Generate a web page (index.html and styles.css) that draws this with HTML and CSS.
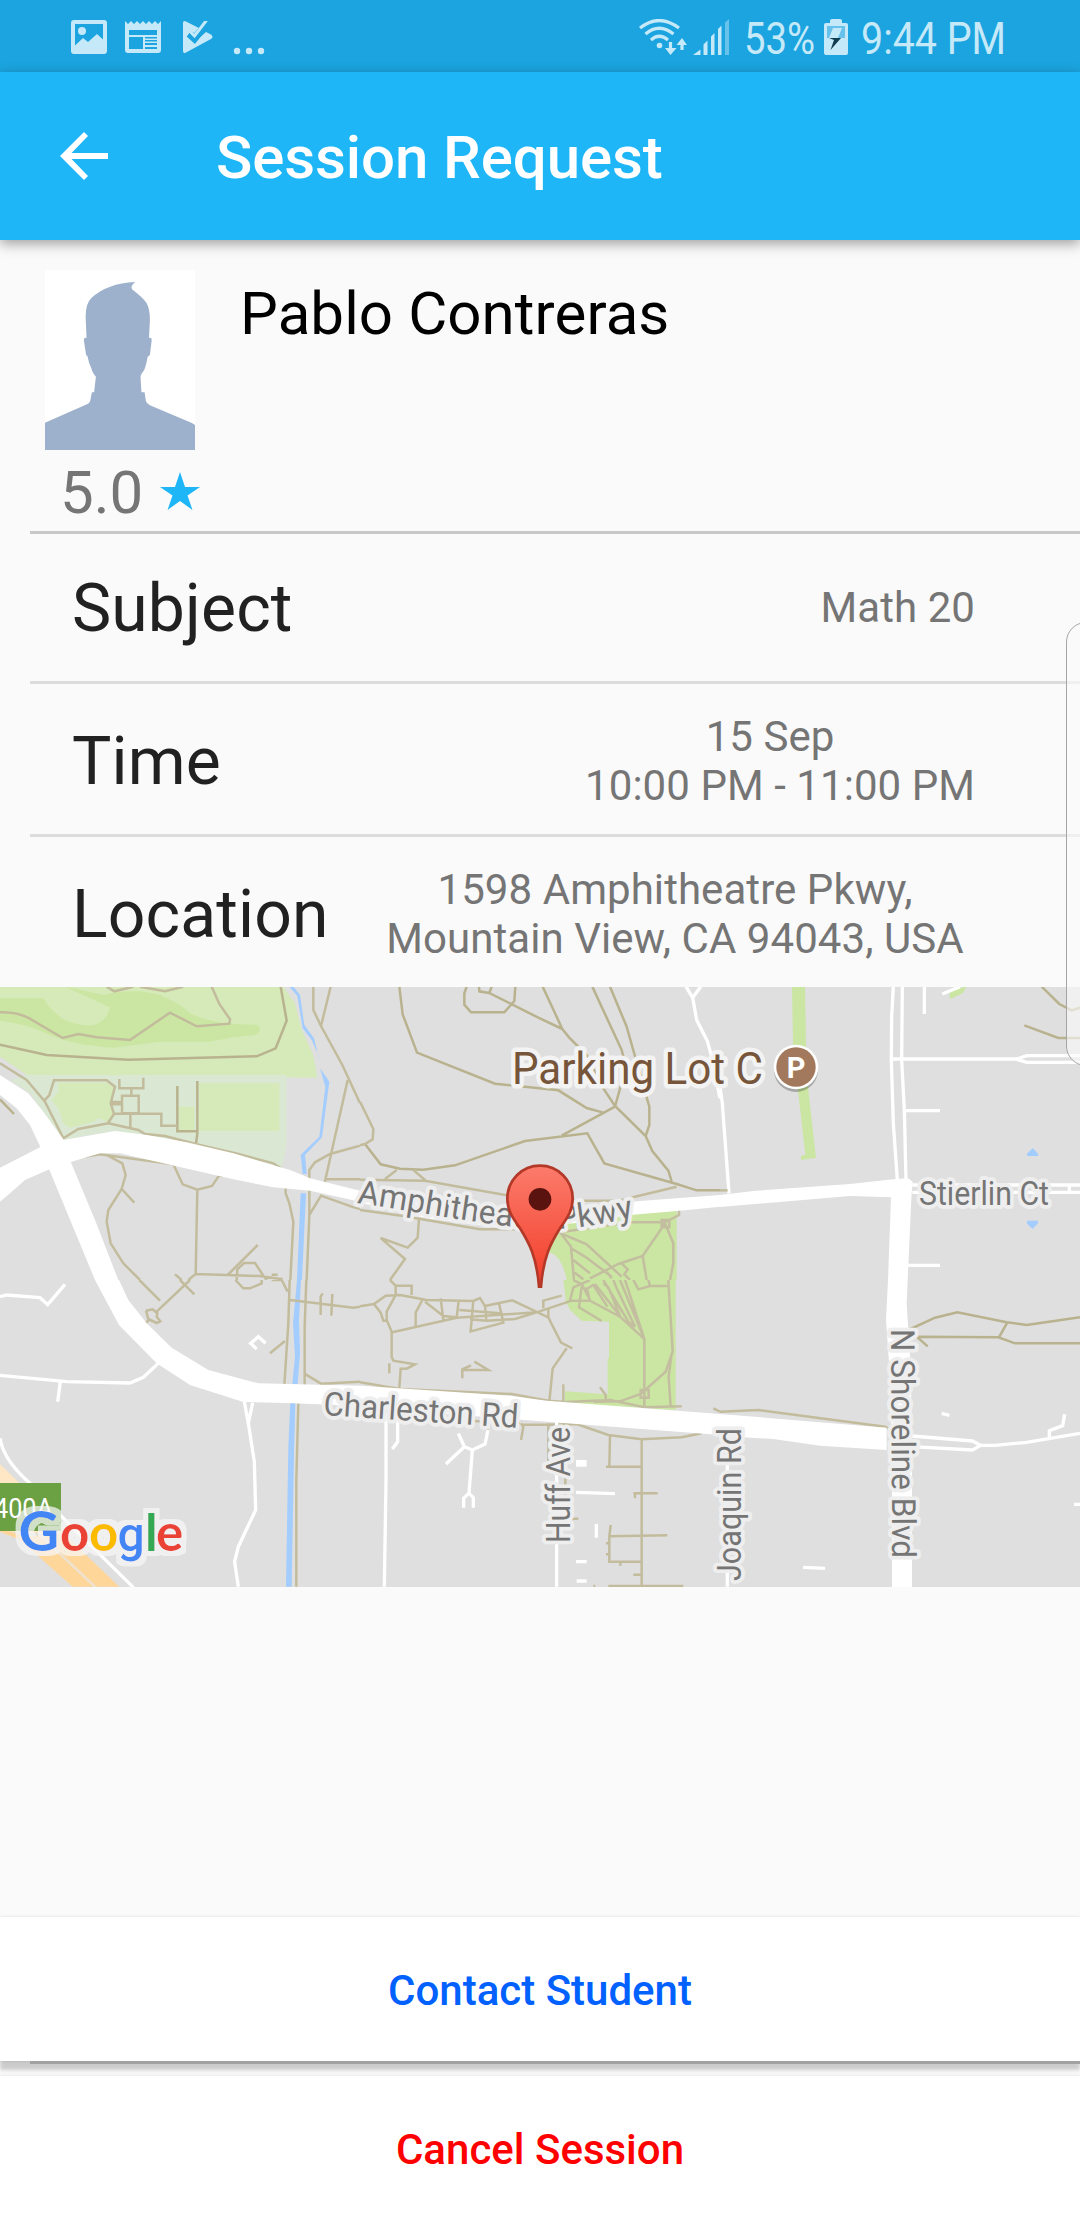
FILE: index.html
```html
<!DOCTYPE html>
<html lang="en">
<head>
<meta charset="utf-8">
<title>Session Request</title>
<link rel="stylesheet" href="styles.css">
</head>
<body>
<div class="screen">
  <header class="status">
    <svg class="status-image" viewBox="0 0 36 34"><path fill-rule="evenodd" d="M3 0H33Q36 0 36 3V31Q36 34 33 34H3Q0 34 0 31V3Q0 0 3 0ZM4 4V25.500L12 18L17 22L26 14L32 19.500V4Z"/><circle cx="11" cy="11" r="4"/></svg>
    <svg class="status-news" viewBox="0 0 36 32"><path fill-rule="evenodd" d="M0 0L3 3L6 0L9 3L12 0L15 3L18 0L21 3L24 0L27 3L30 0L33 3L36 0V29Q36 32 33 32H3Q0 32 0 29ZM4 9V14H32V9ZM4 16V28H18V16ZM20 16V17.500H32V16ZM20 19V20.500H32V19ZM20 22V24H32V22ZM20 26V28H32V26Z"/></svg>
    <svg class="status-check" viewBox="0 0 30 32"><path d="M0 2Q0-1 3 0.500L16 7L11.500 12L7.500 10.500L5 14L11.500 21L23 11L28 13.500Q31 16 28 18L3 31.500Q0 33 0 30Z"/><path d="M6 13L11.500 18L24.500 1.500" fill="none" stroke="#1ba4df" stroke-width="7"/><path d="M6 12.500L11.500 18L24.500 1" fill="none" stroke="#c5e9f8" stroke-width="3" transform="translate(0 -3)"/></svg>
    <svg class="status-dots" viewBox="0 0 32 8"><circle cx="4" cy="4" r="3.200"/><circle cx="16" cy="4" r="3.200"/><circle cx="28" cy="4" r="3.200"/></svg>
    <div class="status-right">
      <svg class="status-wifi" viewBox="0 0 48 36"><g fill="none" stroke="#c5e9f8" stroke-width="3.200"><path d="M1 9Q20-6 40 9M6.500 15Q20 3.500 34.500 15M12 21Q20 13.500 29 21"/><path d="M31.500 23V32M43 31V23"/></g><circle cx="20.500" cy="26.500" r="2.800"/><path d="M26 29L31.500 36L37.500 29ZM37.500 26L43 19L48 26Z"/></svg>
      <svg class="status-signal" viewBox="0 0 36 36"><path d="M0 36L7.500 30.500V36ZM10.500 36V25.500L14.500 21.500V36ZM18 36V17.500L21.500 14V36ZM25 36V10L28.500 6.500V36Z"/><path d="M32 36V3.500L36 0V36Z" opacity=".45"/></svg>
      <svg class="status-percent" viewBox="0 0 76 72"><text x="1" y="54" textLength="71" lengthAdjust="spacingAndGlyphs">53%</text></svg>
      <svg class="status-battery" viewBox="0 0 24 36"><path d="M2 4H6V2Q6 0 8 0H16Q18 0 18 2V4H22Q24 4 24 6V34Q24 36 22 36H2Q0 36 0 34V6Q0 4 2 4Z"/><path d="M3 7H21V19H3Z" fill="#67c1ea"/><path d="M9 9H18L14 19H5Z"/><path d="M5 19H17L6.500 31L10 21Z" fill="#123c50"/></svg>
      <svg class="status-time" viewBox="0 0 152 72"><text x="1" y="54" textLength="145" lengthAdjust="spacingAndGlyphs">9:44 PM</text></svg>
    </div>
  </header>
  <div class="appbar">
    <svg class="back" viewBox="0 0 48 48"><path d="M48 21H11.500L28 4L24 0L0 24L24 48L28 44L11.500 27H48Z"/></svg>
    <h1>Session Request</h1>
  </div>

  <section class="profile">
    <div class="person">
      <svg class="avatar" viewBox="101 90 336 540" preserveAspectRatio="none"><path d="M101 548L195 493Q202 490 203 478L206 457H211L215 410Q206 397 205 385Q199 370 196 348Q193 348 192 335L188 300Q188 292 194 294L192 230Q192 190 205 174Q240 130 303 126Q290 140 297 149Q320 172 328 188Q336 205 336 240L334 294Q340 292 340 300L336 345L331 350Q326 388 320 396Q315 404 315 412L317 457H324L327 483Q328 490 336 496L430 549L437 555V630H101Z"/></svg>
      <div class="rating"><span>5.0</span><svg class="star" viewBox="0 0 40 38"><path d="M20 0L25 15H40L27.500 23.500L32.500 38L20 29L7.500 38L12.500 23.500L0 15H15Z"/></svg></div>
    </div>
    <h2>Pablo Contreras</h2>
  </section>

  <section class="details">
    <div class="row"><span class="label">Subject</span><span class="value">Math 20</span></div>
    <div class="row"><span class="label">Time</span><span class="value"><span class="date">15 Sep</span><br>10:00 PM - 11:00 PM</span></div>
    <div class="row row-location"><span class="label">Location</span><span class="value">1598 Amphitheatre Pkwy,<br>Mountain View, CA 94043, USA</span></div>
  </section>

  <svg class="map" viewBox="0 987 1080 600">
    <defs>
      <linearGradient id="pin" x1="0" y1="0" x2="0" y2="1"><stop offset="0" stop-color="#fc7b6b"/><stop offset="1" stop-color="#f23d29"/></linearGradient>
      <filter id="halo" x="-20%" y="-30%" width="140%" height="160%"><feMorphology in="SourceAlpha" operator="dilate" radius="5"/><feGaussianBlur stdDeviation=".7" result="d"/><feFlood flood-color="#f7f7f7" flood-opacity=".72"/><feComposite in2="d" operator="in" result="h"/><feMerge><feMergeNode in="h"/><feMergeNode in="SourceGraphic"/></feMerge></filter>
      <path id="amph" d="M357 1203C410 1210 480 1225 540 1229C580 1230 610 1222 660 1212"/>
    </defs>

    <!-- north-west tile -->
    <svg x="0" y="980" width="360" height="300" viewBox="0 0 1080 900">
      <path class="park" d="M0 20H850L885 70L905 150L940 225L952 293L600 290L80 285L0 230Z"/>
      <path class="wood" d="M0 55H130Q150 90 190 118Q250 145 290 133Q325 115 330 82L195 20L310 45Q400 22 480 45Q540 70 570 100Q620 125 700 132L770 134Q792 150 765 165L700 172L630 185H480L340 203Q220 195 150 165Q80 130 0 122Z"/>
      <path class="school" d="M30 300L85 285H860V500L845 565L700 525L340 452L190 480L90 340Z"/>
      <path class="park" d="M175 308H320L342 322L330 370L340 402L322 425L295 413L280 425L210 443L190 430L175 385L155 360L175 335ZM597 310H838V453H597ZM537 380H583V450H537Z"/>
      <path class="water" d="M868 20H880L900 45L913 135L942 175L960 250L955 225L935 180L908 145L892 48ZM960 265L988 305L966 472L915 525L920 582H908L902 525L958 470L976 320ZM902 640H918L906 900H891Z"/>
      <path class="trail" d="M0 97Q50 95 88 115L188 174L235 162L290 172L390 180L510 98L590 139L688 131L690 118L658 72L635 20M320 20L343 34L400 20M420 20L495 34L550 20"/>
      <path class="trail dark" d="M0 194L140 225L385 239L770 229L827 205L860 122L842 20M0 358L42 402M592 303V460L587 500M532 318V454H592"/>
      <path class="trail" d="M0 250L80 300L135 365L190 475L235 447L325 430L415 450L435 462L495 468L590 493L715 522L820 550L843 565M133 362L148 345L162 301H320L345 320L332 370L342 402L322 432M358 297V325H430V293M394 325V347M366 347H416V400H366ZM332 366H366M332 373H366M342 401H484V437H532M391 401V445M225 535L300 523L520 553L548 613L592 629L636 618L657 587H672M320 525L367 550L377 585L365 627L325 690L320 725L332 790L370 850L420 900M365 627L403 668M592 629L587 883M525 883L545 900M565 900L587 882L780 888L848 898M683 885L773 795M710 900L712 868L732 849H765L790 887L800 900M815 884H833M857 625V640L868 670L880 725L871 900M928 630V705L920 900M928 705L963 647L1055 680L1080 687M940 20V90L963 138L1027 255L1080 370M992 20L963 138M1043 300L974 608M975 598H1080M928 600V570L945 547L990 522L1080 497"/>
      <path class="road" d="M0 563L120 502L190 480L345 453L440 465L560 487L700 520L870 570L930 595L1080 632V665L930 632L820 622L700 598L500 552L360 520L300 520L215 545L150 567L75 600L30 640L0 665Z"/>
      <path class="road" d="M0 285L85 340L130 395L190 478L212 545L285 720L355 900H285L147 567L123 505L90 435L50 385L0 345Z"/>
    </svg>

    <!-- north tile -->
    <svg x="360" y="980" width="360" height="300" viewBox="0 0 1080 900">
      <path class="wood" d="M560 700L950 692V900H620Q605 830 575 820L550 815Z"/>
      <path class="trail dark" d="M118 20L128 103L171 218L405 311L595 331L680 384L730 398M320 20L313 40V74L333 97H433L463 63L466 20M357 20L358 34L388 39L395 20M388 39L535 113L607 147M548 20L607 147L627 172L680 225L730 325L765 378L857 468L877 513L925 572L935 605M697 20L785 210L790 230V290L765 380L605 467M750 20L800 140L845 300L868 380V435L857 468M15 492L62 553L120 566L190 569L285 556L495 483L682 460L733 550L950 612L1010 631H1080"/>
      <path class="trail" d="M0 365L40 447L38 478L15 492L0 496M0 599L195 602L440 646M75 597L110 570M160 570L200 604M640 662H775L950 620M0 690L130 708L360 748L470 748M177 715L173 773L143 803L62 774L135 837L90 900"/>
      <path class="road" d="M0 632L110 637L300 665L440 697L640 690L810 665L1080 645V680L960 692L810 705L640 730L430 745L200 715L0 668Z"/>
      <path class="minor" d="M978 20L998 53L1022 20M998 53L1010 120L1042 183L1055 230L1080 355"/>
      <path class="trail green" d="M600 757L805 727H915L957 705V692M600 757L633 800L642 900M603 760L680 793L785 890M637 807L680 833L755 890M640 840L690 880M640 875L670 898M915 730L848 828L775 852L690 895M915 730L940 790V850L930 900M848 828L860 900M785 850L803 868L793 883L810 900M740 875L755 895M905 720H928V742H905Z"/>
    </svg>

    <!-- north-east tile -->
    <svg x="720" y="980" width="360" height="300" viewBox="0 0 1080 900">
      <path class="wood" d="M216 20H255L258 190L265 330L288 533L243 540V527L256 525L235 340L219 195ZM687 30L740 20L728 40L690 58Z"/>
      <path class="water" d="M921 521L938 504L954 521V528H921ZM921 722H954V730L938 747L921 731Z"/>
      <path class="trail dark" d="M965 20L1018 72L1055 91L1080 83M913 136L1015 174H1080"/>
      <path class="minor" d="M520 20L515 110L514 240L520 430L532 600M547 20L545 240L553 390L558 600M514 237H890L920 227H1080M890 238L920 247H1080M558 392H660M667 42L720 20M613 20V102M577 615H1080M577 637H1080M1048 615V637M563 856H660M0 320L7 370L27 640"/>
      <path class="trail" d="M0 631H23"/>
      <path class="road" d="M0 645L100 633L390 612L520 598L565 595L578 605L575 640L572 700L563 900H504L513 652L390 648L0 681Z"/>
    </svg>

    <!-- south-west tile -->
    <svg x="0" y="1280" width="360" height="310" viewBox="0 0 1080 930">
      <path class="water" d="M891 0H903L897 120L900 220L893 312H877L885 230L879 130ZM871 368H886L882 520L875 920H858L865 500Z"/>
      <path class="trail" d="M418 0L480 62M540 0L583 43M570 0L470 95M438 92L458 88L472 100L470 110L481 124L470 129L445 117L438 92M436 130L450 117M706 0L730 25H750L785 10V0M815 0H845L863 35M869 0L865 130L853 315M919 0L914 140V315M871 60L1060 83L1080 80M962 105V50L968 40M994 107L997 42M855 183L810 220M912 280L963 311L1080 305M895 370L889 600V920"/>
      <path class="minor" d="M0 50L20 45L120 53L143 74L195 13M0 286L200 305L390 309L430 292L475 250M181 305L173 365M733 365L745 430L763 545L767 690L715 800L704 845L715 920M758 368L745 430M0 475Q10 540 90 610M770 207L752 190L775 170L797 190"/>
      <path class="highway light" d="M0 553L90 640L195 765L0 753Z"/>
      <path class="highway" d="M0 745L80 770L190 760L358 920H218L60 780L0 755Z"/>
      <path class="lane" d="M110 755L288 923"/>
      <path class="minor" d="M90 610L200 725L400 922"/>
      <path class="road" d="M285 0H357L385 60L440 130L515 203L625 270L775 310L1080 317V378L880 370L730 366L570 315L470 250L357 135Z"/>
    </svg>

    <!-- south tile -->
    <svg x="360" y="1280" width="360" height="310" viewBox="0 0 1080 930">
      <path class="wood" d="M610 0H947V390L615 370V334L743 343V235H747V125L665 122L630 90L618 65Z"/>
      <path class="trail green" d="M640 0L665 12L690 60M690 0L640 22L630 62H690L780 110L853 177V380M665 20L657 82L725 123M675 30L700 15L742 80M690 65L680 22M705 12L780 108L745 22L730 10M730 0L805 125L825 140L770 25L760 0M780 0L853 177L795 0M820 0L835 28L870 18H922M865 0L870 18M925 0L938 215L917 275L842 342L780 364L700 365M935 220L926 290L932 380M842 330H866V353H842ZM616 366L750 360L853 382L965 379M720 322L737 345V360M610 313V365"/>
      <path class="trail" d="M0 79L42 72L77 47L120 45L200 60L340 63L360 54L375 78L457 61L565 112L603 188L637 205M42 72L62 98L70 122H80M90 0L107 17H155V45M107 17V45L80 95V120L95 155V230L100 242L165 253L140 266H122L118 325M97 157L290 113L530 97L635 62M187 60L167 98V143M195 65L250 108L290 112L296 63M242 55L250 120M340 60L332 154L430 128L417 70M375 78L379 118M298 90L420 100M330 118L380 122L465 117L530 97M550 85V62L605 47M565 85V115M620 205L578 265L568 365M88 250V280M307 295V268L333 256M310 270H385L343 245M0 307L120 327L455 342L565 362L615 366M483 430L490 440L483 480M490 434H560L650 432L745 465L845 478L965 472L1025 460M565 430V545M750 468L748 560M738 560H845M845 478V920M820 640H893M825 655V640M752 735L748 770V845H845M748 769L922 766M738 790H748M738 823H748M781 845V857M820 884H845M700 918H706M745 918H970M632 716H655M616 545V700M160 415L480 430M382 415V465M1060 385L1080 395"/>
      <path class="minor" d="M78 400V600L73 920M113 400V485L97 507M295 460L313 500L337 510L375 492L384 450M313 500L258 552M337 510L327 640L311 655V683M327 640L340 653V683M590 425V920M648 545H680M648 555H680M648 637L765 641M709 732V773M648 845H680M650 903H680"/>
      <path class="road" d="M0 317L150 327L450 347L560 362L1080 402V465L650 432L300 405L0 380Z"/>
    </svg>

    <!-- south-east tile -->
    <svg x="720" y="1280" width="360" height="310" viewBox="0 0 1080 930">
      <path class="trail dark" d="M565 150L645 113L712 97L860 127L920 135L1080 112M590 170L835 172L885 190H1080M862 127L837 172M590 170L623 199"/>
      <path class="trail" d="M0 395L115 390L495 440L505 445"/>
      <path class="minor" d="M576 468L757 483L782 496L757 510L576 500M782 496H825L920 487L1080 460M988 475V452L1028 437L1034 403M665 400L688 406M1062 673H1080M249 862L315 865M22 475V920"/>
      <path class="road" d="M0 402L500 443V510L300 497L160 477L0 468Z"/>
      <path class="road" d="M504 0H563L560 70L565 150L572 260L576 500V922H516V510L508 260L498 120Z"/>
    </svg>

    <g class="street">
      <text><textPath href="#amph" textLength="280" lengthAdjust="spacingAndGlyphs">Amphitheatre Pkwy</textPath></text>
      <text x="919" y="1205" textLength="130" lengthAdjust="spacingAndGlyphs">Stierlin Ct</text>
      <text transform="translate(323 1415) rotate(3.800)" textLength="195" lengthAdjust="spacingAndGlyphs">Charleston Rd</text>
      <text transform="translate(570 1543) rotate(-90)" textLength="116" lengthAdjust="spacingAndGlyphs">Huff Ave</text>
      <text transform="translate(740.500 1581) rotate(-90)" textLength="153" lengthAdjust="spacingAndGlyphs">Joaquin Rd</text>
      <text transform="translate(891 1329) rotate(89.700)" textLength="229" lengthAdjust="spacingAndGlyphs">N Shoreline Blvd</text>
    </g>
    <text class="place" x="512" y="1084" textLength="251" lengthAdjust="spacingAndGlyphs">Parking Lot C</text>
    <circle cx="796" cy="1070" r="22" fill="#000" opacity=".25"/>
    <circle cx="796" cy="1067" r="22.300" fill="#fff"/>
    <circle cx="796" cy="1067" r="19.700" fill="#a2795c"/>
    <text class="parking" x="796" y="1077.500">P</text>

    <path d="M0 1483H61V1531H0Z" fill="#6ba043"/>
    <text class="exit" x="53" y="1518" textLength="59" lengthAdjust="spacingAndGlyphs">400A</text>
    <text class="google" filter="url(#halo)" y="1551"><tspan class="google-cap" x="18.500" fill="#4285f4">G</tspan><tspan x="60" fill="#ea4335">o</tspan><tspan x="89" fill="#fbbc05">o</tspan><tspan class="google-tail" x="117.500" fill="#4285f4">g</tspan><tspan x="145" fill="#34a853">l</tspan><tspan x="156" fill="#ea4335">e</tspan></text>

    <g transform="translate(360 980) scale(.33333)">
      <path d="M537 920C530 830 507 788 480 745C457 712 442 692 442 655A98 98 0 0 1 638 655C638 692 623 712 600 745C573 788 550 830 543 920Z" fill="url(#pin)" stroke="#b33828" stroke-width="8"/>
      <circle cx="540" cy="658" r="34" fill="#5b130f"/>
    </g>
  </svg>

  <div class="actions">
    <button class="action contact">Contact Student</button>
    <button class="action cancel">Cancel Session</button>
  </div>
  <div class="edge-panel"></div>
</div>
</body>
</html>
```
FILE: styles.css
```css
* { box-sizing: border-box; }
body { margin: 0; background: #fafafa; font-family: Roboto, sans-serif; }
svg { display: block; flex: none; }
h1, h2 { margin: 0; }
.screen { position: relative; display: flex; flex-direction: column; width: 1080px; height: 2220px; overflow: hidden; background: #fafafa; }

.status { display: flex; align-items: flex-start; height: 72px; padding-left: 71px; background: #1ba4df; fill: #c5e9f8; }
.status-image { width: 36px; height: 34px; margin-top: 20px; }
.status-news { width: 36px; height: 32px; margin: 21px 0 0 18px; }
.status-check { width: 30px; height: 32px; margin: 21px 0 0 22px; }
.status-dots { width: 32px; height: 8px; margin: 47px 0 0 20px; }
.status-right { display: flex; margin: 0 68px 0 auto; font-size: 45px; }
.status-wifi { width: 48px; height: 36px; margin-top: 19px; }
.status-signal { width: 36px; height: 36px; margin: 19px 0 0 6px; }
.status-percent { width: 76px; height: 72px; margin-left: 14px; }
.status-battery { width: 24px; height: 36px; margin: 19px 0 0 5px; }
.status-time { width: 152px; height: 72px; margin-left: 12px; }

.appbar { position: relative; display: flex; align-items: center; gap: 108px; height: 168px; padding-left: 60px; background: #1eb6f6; box-shadow: 0 4px 12px rgba(0, 0, 0, .36); }
.back { width: 48px; height: 48px; fill: #fff; }
.appbar h1 { padding-top: 3px; color: #fff; font-size: 60px; line-height: 70px; font-weight: 500; letter-spacing: -.1px; }

.profile { display: flex; gap: 45px; height: 294px; margin-left: 30px; padding: 30px 0 0 15px; border-bottom: 3px solid #c8c8c8; }
.person { width: 150px; }
.avatar { width: 150px; height: 180px; background: #fff; fill: #9db0cc; }
.rating { display: flex; gap: 17px; padding: 8px 0 0 15px; width: 160px; color: #757575; font-size: 60px; line-height: 70px; }
.star { width: 40px; height: 38px; margin-top: 14px; fill: #1eb6f6; }
.profile h2 { padding-top: 9px; color: #000; font-size: 60px; line-height: 70px; font-weight: 400; letter-spacing: .1px; }

.row { display: flex; align-items: center; justify-content: space-between; height: 150px; margin-left: 30px; padding: 2px 105px 0 42px; border-bottom: 3px solid #dcdcdc; }
.row + .row { height: 153px; padding-top: 5px; }
.row + .row-location { height: 150px; border-bottom: 0; padding-top: 5px; }
.label { color: #212121; font-size: 66px; line-height: 77px; letter-spacing: .15px; }
.value { margin-top: -2px; color: #757575; font-size: 42px; line-height: 49px; letter-spacing: .06px; text-align: center; }
.date { padding-right: 20px; }
.row-location .value { width: 600px; }

.map { width: 1080px; height: 600px; background: #dfdfdf; }
.park { fill: #d5eab8; }
.wood { fill: #cae6a2; }
.school { fill: #dae8d3; }
.water { fill: #a3ccff; }
.road { fill: #fff; }
.highway { fill: #ffd699; }
.highway.light { fill: #ffe6c4; }
.lane { fill: none; stroke: #eee2cf; stroke-width: 8; }
.trail { fill: none; stroke: #c2bc9d; stroke-width: 7.5; }
.trail.dark { stroke: #b9b28e; }
.trail.green { stroke: #c4bea0; }
.minor { fill: none; stroke: #fff; stroke-width: 10; }
.street { fill: #757575; stroke: #eee; stroke-width: 8; stroke-linejoin: round; paint-order: stroke; font-size: 33px; }
.place { fill: #76553a; stroke: #f3f3f3; stroke-width: 9; stroke-linejoin: round; paint-order: stroke; font-size: 44px; }
.parking { fill: #fff; font-size: 29px; font-weight: 700; text-anchor: middle; }
.exit { fill: #fff; font-size: 28px; text-anchor: end; }
.google { font-family: Lato, sans-serif; font-size: 51px; font-weight: 700; }
.google-cap { font-size: 56px; }
.google-tail { font-family: Roboto, sans-serif; font-size: 48px; font-weight: 500; }

.actions { display: flex; flex-direction: column; gap: 15px; margin-top: auto; }
.action { position: relative; height: 144px; padding: 3px 0 0; border: 0; background: #fff; font: 500 42px/49px Roboto, sans-serif; box-shadow: 0 0 3px rgba(0, 0, 0, .12); }
.contact { color: #0061ff; box-shadow: 0 0 3px rgba(0, 0, 0, .12), 0 9px 4px rgba(0, 0, 0, .19); }
.contact::after { content: ""; position: absolute; left: 30px; right: 0; top: 144px; height: 3px; background: #a2a2a2; }
.cancel { color: #f00; }
.edge-panel { position: absolute; left: 1066px; top: 622px; width: 40px; height: 444px; border: 1.5px solid #a5a5a5; border-radius: 20px; background: rgba(250, 250, 250, .62); }
```
